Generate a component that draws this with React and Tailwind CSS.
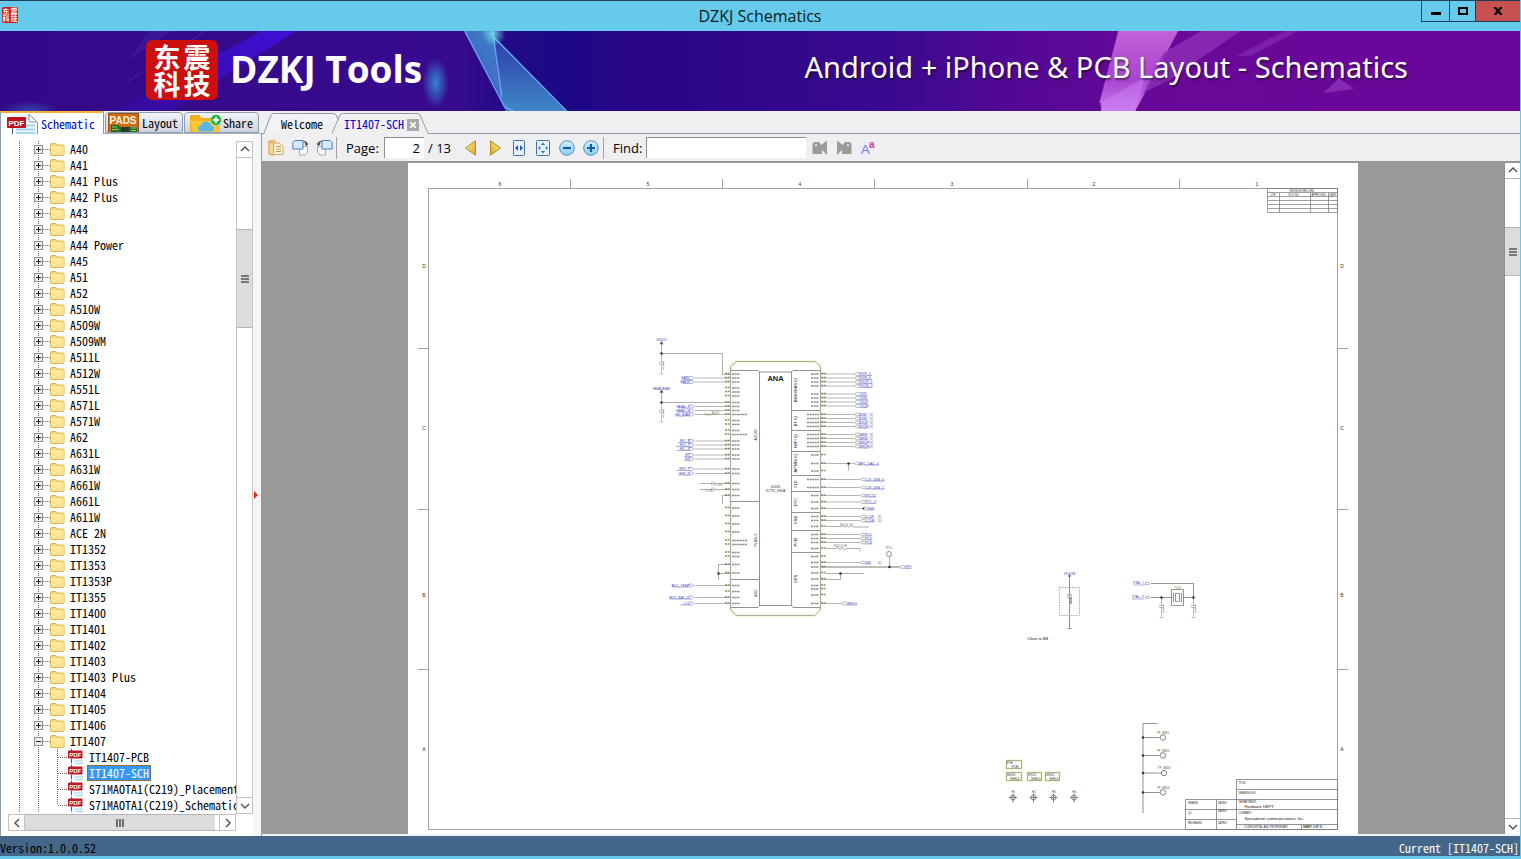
import React, { useState } from "react";

const MONO = "font-['Noto_Sans_Mono_CJK_SC','Liberation_Mono',monospace]";
const UI = "font-['Open_Sans','Noto_Sans',sans-serif]";

const FOLDERS = [
  "A40", "A41", "A41 Plus", "A42 Plus", "A43", "A44", "A44 Power", "A45", "A51", "A52",
  "A510W", "A509W", "A509WM", "A511L", "A512W", "A551L", "A571L", "A571W", "A62", "A631L",
  "A631W", "A661W", "A661L", "A611W", "ACE 2N", "IT1352", "IT1353", "IT1353P", "IT1355",
  "IT1400", "IT1401", "IT1402", "IT1403", "IT1403 Plus", "IT1404", "IT1405", "IT1406",
];
const FILES = ["IT1407-PCB", "IT1407-SCH", "S71MAOTA1(C219)_Placement", "S71MAOTA1(C219)_Schematic"];

/* ---------- icons ---------- */

function FolderIcon() {
  return (
    <svg width="15" height="13" viewBox="0 0 15 13" className="shrink-0" aria-hidden="true">
      <path d="M.5 1.5q0-1 1-1h4l1.500 1.500h6q1 0 1 1v8.500q0 1-1 1h-11.500q-1 0-1-1z" fill="#f5d672" stroke="#dcb858" />
      <path d="M1 4h12.500v7.500h-12.500z" fill="#fce694" />
      <path d="M1 4h12.500" stroke="#fff4bd" />
    </svg>
  );
}

function PdfSmall() {
  return (
    <svg width="16" height="16" viewBox="0 0 16 16" className="shrink-0" aria-hidden="true">
      <path d="M3 1h8l4 4v11H3z" fill="#f3f9fd" />
      <path d="M3.500 10v6M6 12h9M8 14.500h7" stroke="#a9d3ea" />
      <path d="M3.500 0v2M3.500 10v4" stroke="#555" strokeWidth="1" />
      <rect x="0" y="1.500" width="14.500" height="8" rx="1" fill="#c01726" />
      <text x="1.300" y="7.800" fontSize="6" fontWeight="700" fill="#fff" fontFamily="Liberation Sans, sans-serif">PDF</text>
    </svg>
  );
}

function PdfTabIcon() {
  return (
    <svg width="32" height="20" viewBox="0 0 32 20" className="shrink-0" aria-hidden="true">
      <path d="M5 0h17l8 8v12H5z" fill="#eef7fc" />
      <path d="M22 0l8.500 8.500V20M22 0v6q0 2 2 2h6" fill="#fff" stroke="#7d98ac" />
      <path d="M5.500 14v6" stroke="#555" />
      <path d="M9 15.500h19M18 11.500h10M9 19h19" stroke="#a3d6ef" strokeWidth="2" />
      <rect x="0" y="3" width="19" height="11" rx="1" fill="#c3101f" />
      <text x="1.500" y="11.500" fontSize="8" fontWeight="700" fill="#fff" fontFamily="Liberation Sans, sans-serif">PDF</text>
    </svg>
  );
}

function PadsIcon() {
  return (
    <svg width="31" height="19" viewBox="0 0 31 19" className="shrink-0" aria-hidden="true">
      <rect x=".5" y=".5" width="30" height="19" fill="#cf6a1c" stroke="#a4500f" />
      <path d="M3 12h7l2 2h17v5H3z" fill="#286a2c" />
      <rect x="13" y="14" width="8" height="5" fill="#263a2d" />
      <path d="M4 14h5M4 16.500h7M23 15h5M23 17.500h5" stroke="#8bd05b" />
      <text x="1.500" y="10.500" fontSize="10" fontWeight="700" fill="#fff6cf" fontFamily="Liberation Sans, sans-serif">PADS</text>
    </svg>
  );
}

function ShareIcon() {
  return (
    <svg width="32" height="18" viewBox="0 0 32 18" className="shrink-0" aria-hidden="true">
      <path d="M0 2q0-1 1-1h8l3 3h16q2 0 2 2v12H2q-2 0-2-2z" fill="#f3b01d" />
      <path d="M0 7h30v11H3z" fill="#fcc733" />
      <path d="M11 17.500q-3 0-3-3t3-3q1-4 5-4t5 4q3 .5 3 3t-3 3z" fill="#58b5ee" />
      <circle cx="26" cy="6" r="5.500" fill="#2db34a" stroke="#c5edcc" strokeWidth=".6" />
      <path d="M26 3v6M23 6h6" stroke="#fff" strokeWidth="1.800" />
    </svg>
  );
}

function OpenIcon() {
  return (
    <svg width="16" height="16" viewBox="0 0 16 16" aria-hidden="true">
      <path d="M1 1l6-.5v13l-6 1z" fill="#f2d089" stroke="#d9a84e" />
      <path d="M5 3h6l4 3v8.500H5z" fill="#fdf3d8" stroke="#c9a869" />
      <path d="M8 6.500h5M8 9h5M8 11.500h5" stroke="#c79b4d" />
      <path d="M1 1.500l4.500 2.500v11.500L1 13.500z" fill="#f7d896" stroke="#d9a84e" />
    </svg>
  );
}

function RotateIcon({ flip }) {
  return (
    <svg width="17" height="16" viewBox="0 0 17 16" className={flip ? "-scale-x-100" : ""} aria-hidden="true">
      <path d="M7.500 6.500h8v6l-2.500 2.500H7.500z" fill="#f8f8f8" stroke="#a9a9a9" />
      <path d="M.8 2.500l2-2H11v8.500H.8z" fill="#d4e9fa" stroke="#4a80b4" />
      <path d="M11.500 1.500q3 0 3 2.500" fill="none" stroke="#333" strokeWidth="1.200" />
      <path d="M12.500 3.500h4l-2 2.500z" fill="#333" />
    </svg>
  );
}

function ArrowIcon({ flip }) {
  return (
    <svg width="14" height="16" viewBox="0 0 14 16" className={flip ? "-scale-x-100" : ""} aria-hidden="true">
      <defs>
        <linearGradient id="gold" x1="0" x2="1" y1="0" y2="1">
          <stop offset="0" stopColor="#fff0a4" />
          <stop offset="1" stopColor="#d8a51f" />
        </linearGradient>
      </defs>
      <path d="M1.500 8L11.500.8V15.200z" fill="url(#gold)" stroke="#b58a1c" strokeLinejoin="round" />
    </svg>
  );
}

function FitIcon({ page }) {
  return (
    <svg width="16" height="16" viewBox="0 0 16 16" aria-hidden="true">
      {page ? (
        <>
          <rect x="1.500" y=".5" width="13" height="15" rx="1" fill="#e4f1fd" stroke="#416fa6" />
          <path d="M8 2.500l2 2.500H6zM8 13.500l2-2.500H6zM3 8l2.200-2v4zM13 8l-2.200-2v4z" fill="#2c6cb5" />
        </>
      ) : (
        <>
          <rect x="2.500" y=".5" width="11" height="15" rx="1" fill="#e4f1fd" stroke="#416fa6" />
          <path d="M4 8l3-3v6zM12 8L9 5v6z" fill="#1c60b0" />
        </>
      )}
    </svg>
  );
}

function ZoomIcon({ plus }) {
  return (
    <svg width="16" height="16" viewBox="0 0 16 16" aria-hidden="true">
      <defs>
        <linearGradient id="zoomFill" x1="0" x2="0" y1="0" y2="1">
          <stop offset="0" stopColor="#d6f0ff" />
          <stop offset="1" stopColor="#86d0f8" />
        </linearGradient>
      </defs>
      <circle cx="8" cy="8" r="7.300" fill="url(#zoomFill)" stroke="#5f8caf" />
      <path d={plus ? "M4 8h8M8 4v8" : "M4 8h8"} stroke="#145a9c" strokeWidth="2.200" />
    </svg>
  );
}

function FindIcon({ flip }) {
  return (
    <svg width="16" height="16" viewBox="0 0 16 16" className={flip ? "-scale-x-100" : ""} aria-hidden="true">
      <path d="M.5 4.500L2 2h5.500l1.500 3L15 .5v14.500l-5-5v4H.5z" fill="#9b9b9b" />
      <circle cx="4" cy="5" r="1" fill="#efeff2" />
    </svg>
  );
}

function CaseIcon() {
  return (
    <svg width="16" height="18" viewBox="0 0 16 18" aria-hidden="true">
      <text x="1" y="15" fontSize="13" fill="#7f6fe6" fontFamily="Liberation Sans, sans-serif">A</text>
      <text x="9" y="9" fontSize="10" fontWeight="700" fill="#c440ad" fontFamily="Liberation Sans, sans-serif">a</text>
    </svg>
  );
}

function Chevron({ dir }) {
  const d = { up: "M1 6l4-4 4 4", down: "M1 3l4 4 4-4", left: "M7 1L3 5l4 4", right: "M3 1l4 4-4 4" }[dir];
  return (
    <svg width="10" height="10" viewBox="0 0 10 10" aria-hidden="true">
      <path d={d} fill="none" stroke="#555" strokeWidth="1.500" />
    </svg>
  );
}

function Grip({ vertical }) {
  return (
    <svg width="8" height="8" viewBox="0 0 8 8" aria-hidden="true">
      <path d={vertical ? "M1 0v8M4 0v8M7 0v8" : "M0 1h8M0 4h8M0 7h8"} stroke="#555" strokeWidth="1.600" />
    </svg>
  );
}

/* ---------- window frame ---------- */

function TitleBar() {
  return (
    <header className={`${UI} grid h-[31px] shrink-0 grid-cols-[1fr_auto_1fr] items-start border-t border-[#1d3f55] bg-[#66cbea]`}>
      <div className="pt-1.5 pl-0.5">
        <div aria-hidden="true" className="grid h-4 w-4 grid-cols-2 content-center justify-items-center rounded-xs bg-[#cc1414] font-['Noto_Sans_CJK_SC',sans-serif] text-[7px] leading-[7px] font-bold text-white">
          <span>东</span><span>震</span><span>科</span><span>技</span>
        </div>
      </div>
      <h1 className="text-base leading-[30px] text-[#0c1c24]">DZKJ Schematics</h1>
      <div className="flex h-[21px] justify-end">
        <button aria-label="Minimize" className="flex w-[28px] items-center justify-center border-b border-l border-[#1d3f55]">
          <span className="mt-1 h-[3px] w-2.5 bg-black" />
        </button>
        <button aria-label="Maximize" className="flex w-[26px] items-center justify-center border-b border-l border-[#1d3f55]">
          <span className="h-2 w-2.5 border-2 border-black" />
        </button>
        <button aria-label="Close" className="flex w-[45px] items-center justify-center border-b border-l border-[#1d3f55] bg-[#c75050]">
          <svg width="10" height="8" viewBox="0 0 10 8" aria-hidden="true">
            <path d="M1.500 0l7 8M8.500 0l-7 8" stroke="#000" strokeWidth="2.200" />
          </svg>
        </button>
      </div>
    </header>
  );
}

function BannerArt() {
  return (
    <svg className="absolute inset-0 h-full w-full" viewBox="0 31 1521 80" preserveAspectRatio="none" aria-hidden="true">
      <defs>
        <linearGradient id="bg" x1="0" x2="1" y1="0" y2="0">
          <stop offset="0" stopColor="#330989" />
          <stop offset=".3" stopColor="#380b8e" />
          <stop offset=".33" stopColor="#240a88" />
          <stop offset=".37" stopColor="#1c0886" />
          <stop offset=".43" stopColor="#2b0587" />
          <stop offset=".58" stopColor="#390990" />
          <stop offset=".68" stopColor="#570896" />
          <stop offset=".78" stopColor="#6a089a" />
          <stop offset="1" stopColor="#6a069a" />
        </linearGradient>
        <linearGradient id="beam" x1="1" x2="0" y1="0" y2="1">
          <stop offset="0" stopColor="#4210f0" stopOpacity=".75" />
          <stop offset="1" stopColor="#4210f0" stopOpacity=".15" />
        </linearGradient>
        <linearGradient id="shardA" x1="0" x2="1" y1="1" y2="0">
          <stop offset="0" stopColor="#3a5cc0" />
          <stop offset="1" stopColor="#4382c8" />
        </linearGradient>
        <linearGradient id="shardB" x1="0" x2="0" y1="0" y2="1">
          <stop offset="0" stopColor="#2f3aa8" />
          <stop offset="1" stopColor="#3f85c8" />
        </linearGradient>
        <linearGradient id="pink" x1="0" x2="0" y1="0" y2="1">
          <stop offset="0" stopColor="#c262d8" />
          <stop offset=".6" stopColor="#a944d0" />
          <stop offset="1" stopColor="#c676ee" />
        </linearGradient>
        <radialGradient id="glow">
          <stop offset="0" stopColor="#3593d8" stopOpacity=".9" />
          <stop offset="1" stopColor="#3593d8" stopOpacity="0" />
        </radialGradient>
        <radialGradient id="spark">
          <stop offset="0" stopColor="#72f2ee" stopOpacity=".8" />
          <stop offset="1" stopColor="#72f2ee" stopOpacity="0" />
        </radialGradient>
      </defs>
      <rect y="31" width="1521" height="80" fill="url(#bg)" />
      <path d="M262 31h34L170 111h-55z" fill="url(#beam)" />
      <path d="M150 31h22L126 62z" fill="#4a2ba8" opacity=".35" />
      <path d="M206 31L127 82" stroke="#5538b8" opacity=".6" />
      <ellipse cx="30" cy="111" rx="28" ry="10" fill="url(#glow)" opacity=".5" />
      <ellipse cx="436" cy="83" rx="13" ry="25" fill="url(#glow)" />
      <path d="M465 31h28l9 68z" fill="url(#shardA)" />
      <path d="M493 36l73 75h-60l-6-14z" fill="url(#shardB)" />
      <path d="M465 31l40 76 9 4M493 31l9 66M493 36l74 75" fill="none" stroke="#6ba5f0" strokeWidth="1.500" />
      <circle cx="494" cy="34" r="12" fill="url(#spark)" />
      <path d="M1119 31h60l-43 80h-34v-8h-2z" fill="url(#pink)" />
      <path d="M1101 103l45-26-10 34h-34z" fill="#cf86f2" opacity=".45" />
      <path d="M1202 31h39l-69 48-28 14 20-40z" fill="#8c2fb4" opacity=".8" />
      <path d="M1285 31h14l-48 25h-14z" fill="#812aad" opacity=".7" />
      <path d="M1340 78l15 11-31 4z" fill="#8429b2" />
    </svg>
  );
}

function Banner() {
  return (
    <section className={`${UI} relative h-20 shrink-0 bg-[#330989]`}>
      <BannerArt />
      <div className="relative flex h-full items-center justify-between pr-28 pb-1 pl-[146px]">
        <div className="flex items-center gap-3">
          <div className="mt-0.5 grid h-[60px] w-[72px] grid-cols-2 content-center justify-items-center rounded-md bg-[#cc0f0f] px-1.5 font-['Noto_Sans_CJK_SC',sans-serif] text-[27px] leading-[27px] font-bold text-white">
            <span>东</span><span>震</span><span>科</span><span>技</span>
          </div>
          <p className="text-[37px] leading-10 font-bold text-white">DZKJ Tools</p>
        </div>
        <p className="pb-1 font-['Noto_Sans',sans-serif] text-[29px] leading-10 font-normal text-white [text-shadow:1px_2px_2px_rgba(0,0,0,0.5)]">
          Android + iPhone &amp; PCB Layout - Schematics
        </p>
      </div>
    </section>
  );
}

/* ---------- tree panel ---------- */

function SideTabs() {
  const idle = "flex h-[21px] items-center overflow-hidden rounded-t-sm border border-[#8b9bb0] bg-linear-to-b from-[#f4f5f9] to-[#cdd2e0]";
  return (
    <div role="tablist" className={`${MONO} flex h-[23px] shrink-0 items-end gap-px border-b border-[#a5b3c2] bg-[#f0f0f0] text-xs leading-4`}>
      <button role="tab" aria-selected="true" className="-mb-px flex h-[23px] w-[104px] items-center gap-0.5 overflow-hidden border-t-2 border-r border-l border-t-[#f9b13c] border-r-[#8b9bb0] border-l-[#8b9bb0] bg-white pl-1.5 text-[#0000c8]">
        <PdfTabIcon />Schematic
      </button>
      <button role="tab" aria-selected="false" className={`${idle} w-[78px] gap-[3px] pl-0.5`}>
        <PadsIcon />Layout
      </button>
      <button role="tab" aria-selected="false" className={`${idle} w-[75px] gap-px pl-[5px]`}>
        <ShareIcon />Share
      </button>
    </div>
  );
}

function Expander({ open }) {
  return (
    <svg width="42" height="16" viewBox="0 0 42 16" className="shrink-0" aria-hidden="true">
      <path d="M11.500 0v16M30.500 0v16" stroke="#6b6b6b" strokeDasharray="1 1" />
      <path d="M35 8.500h7" stroke="#6b6b6b" strokeDasharray="1 1" />
      <rect x="26.500" y="4.500" width="8" height="8" fill="#ededed" stroke="#8c8c8c" />
      <path d={open ? "M28 8.500h5" : "M28 8.500h5M30.500 6v5"} stroke="#222" />
    </svg>
  );
}

function FolderRow({ name, open }) {
  return (
    <li role="treeitem" aria-expanded={!!open} className="flex h-4 items-center">
      <Expander open={open} />
      <button className="flex h-4 items-center gap-[5px] whitespace-nowrap">
        <FolderIcon />
        <span>{name}</span>
      </button>
    </li>
  );
}

function FileRow({ name, selected, last, onPick }) {
  return (
    <li role="treeitem" aria-selected={selected} className="flex h-4 items-center">
      <svg width="60" height="16" viewBox="0 0 60 16" className="shrink-0" aria-hidden="true">
        <path d="M11.500 0v16M30.500 0v16" stroke="#6b6b6b" strokeDasharray="1 1" />
        <path d={last ? "M49.500 0v8" : "M49.500 0v16"} stroke="#6b6b6b" strokeDasharray="1 1" />
        <path d="M50 8.500h10" stroke="#6b6b6b" strokeDasharray="1 1" />
      </svg>
      <button onClick={onPick} className="flex h-4 items-center gap-[3px] whitespace-nowrap">
        <PdfSmall />
        <span className={selected ? "h-4 bg-[#3399ff] px-0.5 text-white outline-1 -outline-offset-1 outline-dotted outline-[#8a5a20]" : "px-0.5"}>{name}</span>
      </button>
    </li>
  );
}

function TreePanel() {
  const [picked, setPicked] = useState("IT1407-SCH");
  const arrow = "flex shrink-0 items-center justify-center border border-[#c3c3c3] bg-white";
  return (
    <aside className="flex w-[262px] shrink-0 flex-col bg-[#f7f8fa]">
      <SideTabs />
      <div className="flex min-h-0 flex-1">
        <div className="flex min-w-0 flex-1 flex-col border-l border-[#8b9bb0] bg-white pt-[7px] pb-[5px] pl-[7px]">
          <div className="flex min-h-0 flex-1">
            <ul role="tree" aria-label="Models" className={`${MONO} min-w-0 flex-1 overflow-hidden text-xs leading-4 text-black`}>
              {FOLDERS.map((f) => <FolderRow key={f} name={f} />)}
              <FolderRow name="IT1407" open />
              {FILES.map((f, i) => (
                <FileRow key={f} name={f} selected={picked === f} last={i === FILES.length - 1} onPick={() => setPicked(f)} />
              ))}
            </ul>
            <div className="flex w-[17px] shrink-0 flex-col border-x border-[#c3c3c3]">
              <button aria-label="Scroll up" className={`${arrow} h-[17px] border-x-0`}><Chevron dir="up" /></button>
              <div className="flex-[71]" />
              <div className="flex flex-[98] items-center justify-center border-y border-[#b5b5b5] bg-[#dcdcdc]"><Grip /></div>
              <div className="flex-[470]" />
              <button aria-label="Scroll down" className={`${arrow} h-[17px] border-x-0`}><Chevron dir="down" /></button>
            </div>
          </div>
          <div className="mr-[17px] flex h-[17px] shrink-0 bg-white">
            <button aria-label="Scroll left" className={`${arrow} w-[17px]`}><Chevron dir="left" /></button>
            <div className="flex flex-1 items-center justify-center border-y border-[#b5b5b5] bg-[#dcdcdc]"><Grip vertical /></div>
            <div className="w-1 border-y border-[#c3c3c3]" />
            <button aria-label="Scroll right" className={`${arrow} w-[17px]`}><Chevron dir="right" /></button>
          </div>
        </div>
        <div className="flex w-[9px] shrink-0 items-center border-r border-[#8b9bb0] bg-[#f5f6f8]">
          <svg width="8" height="8" viewBox="0 0 8 8" className="mt-5" aria-hidden="true">
            <path d="M1 0l4 4-4 4z" fill="#e02b20" />
          </svg>
        </div>
      </div>
    </aside>
  );
}

/* ---------- document area ---------- */

function DocTabs() {
  return (
    <div role="tablist" className={`${MONO} flex h-[23px] shrink-0 items-end bg-[#efefef] text-xs leading-4`}>
      <button role="tab" aria-selected="false" className="relative h-[21px] w-[78px] pl-[19px] text-left text-black">
        <svg className="absolute top-0 left-0" width="80" height="21" viewBox="0 0 80 21" aria-hidden="true">
          <path d="M0 20.500h2L9 2q1-1.500 2.500-1.500H71q2 0 3 1.500l3 6" fill="#f3f3f5" stroke="#8b9bb0" />
        </svg>
        <span className="relative">Welcome</span>
      </button>
      <div className="relative flex h-[21px] w-[92px] items-center gap-[3px] pl-1">
        <svg className="absolute top-0 -left-2" width="100" height="21" viewBox="0 0 100 21" aria-hidden="true">
          <path d="M0 20.500L8 2q1-1.500 2.500-1.500H85q2 0 3 1.500l8 18.500" fill="#f0f0f0" stroke="#8b9bb0" />
          <path d="M1 20.500h94" stroke="#f0f0f0" />
          <path d="M96 20.500h4" stroke="#8b9bb0" />
        </svg>
        <button role="tab" aria-selected="true" className="relative text-[#0000c8]">IT1407-SCH</button>
        <button aria-label="Close tab" className="relative mt-0.5 flex h-3 w-3 items-center justify-center bg-[#a8a8a8]">
          <svg width="6" height="6" viewBox="0 0 6 6" aria-hidden="true"><path d="M0 0l6 6M6 0L0 6" stroke="#fff" strokeWidth="1.600" /></svg>
        </button>
      </div>
      <div className="h-full flex-1 border-b border-[#8b9bb0]" />
    </div>
  );
}

function Tool({ label, children }) {
  return <button aria-label={label} className="flex h-6 w-6 shrink-0 items-center justify-center">{children}</button>;
}

function Toolbar() {
  const [page, setPage] = useState("2");
  const [query, setQuery] = useState("");
  const field = "h-[21px] border-t border-l border-[#8f8f8f] bg-white text-[13px] leading-5 outline-none";
  return (
    <div className={`${UI} flex h-[27px] shrink-0 items-center bg-[#efeff1] pl-0.5 text-[13px] leading-5 text-black`}>
      <Tool label="Open"><OpenIcon /></Tool>
      <Tool label="Rotate right"><RotateIcon /></Tool>
      <Tool label="Rotate left"><RotateIcon flip /></Tool>
      <span className="h-[22px] w-px bg-[#a0a0a0]" />
      <label htmlFor="page" className="ml-[9px] w-[38px]">Page:</label>
      <input id="page" value={page} onChange={(e) => setPage(e.target.value)} className={`${field} w-10 pr-1 text-right`} />
      <span className="ml-1 w-[31px] whitespace-nowrap">/ 13</span>
      <Tool label="Previous page"><ArrowIcon /></Tool>
      <Tool label="Next page"><ArrowIcon flip /></Tool>
      <Tool label="Fit width"><FitIcon /></Tool>
      <Tool label="Fit page"><FitIcon page /></Tool>
      <Tool label="Zoom out"><ZoomIcon /></Tool>
      <Tool label="Zoom in"><ZoomIcon plus /></Tool>
      <span className="h-[22px] w-px bg-[#a0a0a0]" />
      <label htmlFor="find" className="ml-[9px] w-[33px]">Find:</label>
      <input id="find" value={query} onChange={(e) => setQuery(e.target.value)} className={`${field} w-40 px-1`} />
      <span className="w-0.5" />
      <Tool label="Find previous"><FindIcon /></Tool>
      <Tool label="Find next"><FindIcon flip /></Tool>
      <Tool label="Match case"><CaseIcon /></Tool>
    </div>
  );
}

/* ---------- schematic sheet ---------- */

const LEFT_PINS = [374, 378, 382, 388, 392, 396, 402.5, 406.5, 410.5, 414.5, 420.5, 424.5, 430.5, 434.5, 441, 445, 449, 455, 459, 469, 473.5, 483.5, 489.5, 495.5, 508, 516, 524, 532, 540.5, 544.5, 552.5, 556.5, 564.5, 573, 585.5, 591.5, 597.5, 603.5];
const RIGHT_PINS = [374, 378, 382, 386, 394, 398, 402, 406, 414.5, 418.5, 422.5, 426.5, 434.5, 438.5, 442.5, 446.5, 455, 463.5, 471, 479.5, 487.5, 495.5, 502, 508.5, 516.5, 520.5, 526.5, 534.5, 538.5, 542.5, 548.5, 556.5, 562.5, 567, 573, 579, 585.5, 589, 595, 603.5];
const WIDE = [414.5, 418.5, 422.5, 426.5, 434.5, 438.5, 442.5, 446.5, 479.5, 487.5, 540.5, 544.5];

const LEFT_NETS = [
  [378, 682, "EARL"], [382, 682, "EARR"], [406.5, 678, "HEAD_P"], [410.5, 677, "HEAD_N"], [414.5, 675, "HD_BIAS"],
  [441, 678, "MIC_B"], [445, 676, "MIC_P"], [449, 676, "MIC_N"], [455, 684, "EP"], [459, 684, "EN"],
  [469, 676, "SPK_P"], [473.5, 678, "SPK_N"], [585.5, 673, "ADC_TEMP"], [597.5, 671, "ADC_BAT_ID"], [603.5, 680, "LCD"],
];
const RIGHT_NETS = [
  [374, 855, "RXIP_0"], [378, 855, "RXIN_0"], [382, 855, "RXQP_0"], [386, 855, "RXQN_0"],
  [394, 855, "TXIP"], [398, 855, "TXIN"], [402, 855, "TXQP"], [406, 855, "TXQN"],
  [414.5, 855, "BTIP"], [418.5, 855, "BTIN"], [422.5, 855, "BTQP"], [426.5, 855, "BTQN"],
  [434.5, 855, "WFIP"], [438.5, 855, "WFIN"], [442.5, 855, "WFQP"], [446.5, 855, "WFQN"],
  [463.5, 855, "APC_DAC_0"], [479.5, 861, "CLK_26M_0"], [487.5, 861, "CLK_26M_1"], [495.5, 861, "RTC32"], [502, 861, "RTC_O"],
  [508.5, 863, "GND"], [516.5, 861, "U_DP"], [520.5, 861, "U_DM"], [534.5, 861, "PCC"], [538.5, 861, "PCD"], [542.5, 861, "PCS"],
  [562.5, 861, "GPI"], [567, 900, "GPQ"], [603.5, 842, "TEST0"],
];
const RIGHT_SECTIONS = [
  ["BB/MIDAS IQ", 390], ["BT IQ", 421], ["WIFI IQ", 441], ["AP MBI IQ", 463], ["CLK", 484], ["DTC", 502], ["USB", 520], ["PCM", 542], ["GPS", 579],
];
const COLS = [["6", 500], ["5", 648], ["4", 800], ["3", 952], ["2", 1094], ["1", 1257]];
const ROWS = [["D", 266], ["C", 428], ["B", 595], ["A", 749]];

function Vertical({ x, y, size = 4, children }) {
  return <text x={x} y={y} fontSize={size} textAnchor="middle" transform={`rotate(-90 ${x} ${y})`}>{children}</text>;
}

function Capacitor({ x, y }) {
  return (
    <g stroke="#96966e">
      <path d={`M${x} ${y}v8m-2.500 0h5m-5 2h5m-2.500 0v9`} fill="none" strokeWidth=".6" />
      <path d={`M${x - 2} ${y + 20}h4`} strokeWidth=".6" />
      <path d={`M${x + 2} ${y + 7}v9`} strokeDasharray="1.200 .6" strokeWidth="1.400" stroke="#a9a98a" />
    </g>
  );
}

function Dot({ x, y, r = 1.3 }) {
  return <circle cx={x} cy={y} r={r} fill="#333" stroke="none" />;
}

function Schematic() {
  return (
    <svg viewBox="408 163 950 671" className="block w-full" role="img" aria-label="IT1407 schematic, page 2" fontFamily="Liberation Sans, sans-serif" fill="none" strokeWidth=".8">
      {/* sheet border, zone marks */}
      <g stroke="#a4a4a4" strokeWidth="1">
        <rect x="428.500" y="188.500" width="909" height="641" />
        <path d="M570.500 179v9M722.500 179v9M874.500 179v9M1027.500 179v9M1179.500 179v9" />
        <path d="M418 348.500h10M418 509.500h10M418 669.500h10M1338 348.500h10M1338 509.500h10M1338 669.500h10" />
      </g>
      <g fill="#333" fontSize="5" textAnchor="middle">
        {COLS.map(([t, x]) => <text key={t} x={x} y="186">{t}</text>)}
        {ROWS.map(([t, y]) => <text key={t} x="424" y={y + 2}>{t}</text>)}
        {ROWS.map(([t, y]) => <text key={t} x="1342" y={y + 2}>{t}</text>)}
      </g>

      {/* revision block */}
      <path d="M1267.500 188.500h70v24h-70zM1267.500 192.500h70M1267.500 196.500h70M1267.500 200.500h70M1267.500 204.500h70M1267.500 208.500h70M1279.500 192.500v20M1310.500 192.500v20M1328.500 192.500v20" stroke="#777" strokeWidth=".7" />
      <g fill="#333" fontSize="2.600" textAnchor="middle">
        <text x="1302" y="191.500">REVISION RECORD</text>
        <text x="1273" y="195.500">LTR</text><text x="1294" y="195.500">ECO NO:</text><text x="1319" y="195.500">APPROVED:</text><text x="1333" y="195.500">DATE:</text>
      </g>

      {/* main chip */}
      <path d="M736 361.500h79l5.500 5v243l-5.500 6h-79l-5.500-6v-243z" stroke="#f8f8dc" strokeWidth="3" />
      <path d="M736 361.500h79l5.500 5v243l-5.500 6h-79l-5.500-6v-243z" stroke="#8c8c84" strokeWidth=".7" />
      <path d="M731 370.500h27l1.500 1.500h32l1.500-1.500h27M731 607.500h27l1.500-2h32l1.500 2h27M759.500 372v233.500M791.500 372v233.500" stroke="#777" />
      <path d="M731 501.500h28M731 579.500h28M792 410.500h28M792 430.500h28M792 451.500h28M792 475.500h28M792 491.500h28M792 512.500h28M792 530.500h28M792 552.500h28" stroke="#777" />
      <g fill="#222">
        <text x="775.500" y="381" fontSize="7.500" fontWeight="700" textAnchor="middle">ANA</text>
        <text x="775.500" y="488" fontSize="2.600" textAnchor="middle">U0101E</text>
        <text x="775.500" y="491.500" fontSize="2.600" textAnchor="middle">SC7731_LFBGA</text>
        {RIGHT_SECTIONS.map(([t, y]) => <Vertical key={t} x={797} y={y}>{t}</Vertical>)}
        <Vertical x={757} y={435} size={3.5}>AUDIO</Vertical>
        <Vertical x={757} y={540} size={3.5}>PLAID II</Vertical>
        <Vertical x={757} y={593} size={3.5}>ADC</Vertical>
      </g>
      <g strokeWidth="1.500" strokeDasharray="2 .6">
        {LEFT_PINS.map((y) => (
          <g key={y}>
            <path d={`M725 ${y - 0.5}h5`} stroke="#8f8f68" />
            <path d={`M732 ${y}h${WIDE.includes(y) ? 15 : 8}`} stroke="#8a8a8a" />
          </g>
        ))}
        {RIGHT_PINS.map((y) => (
          <g key={y}>
            <path d={`M821 ${y - 0.5}h5`} stroke="#8f8f68" />
            <path d={`M${WIDE.includes(y) ? 807 : 811} ${y}h${WIDE.includes(y) ? 12 : 8}`} stroke="#8a8a8a" />
          </g>
        ))}
      </g>

      {/* nets on both sides */}
      <g stroke="#858585" strokeWidth=".6">
        {LEFT_NETS.map(([y]) => <path key={y} d={`M695 ${y}h35`} />)}
        {RIGHT_NETS.map(([y, x]) => <path key={y} d={`M821 ${y}H${x - 1}M${x + 4} ${y - 1.300}h-3l-1.500 1.300 1.500 1.300h3`} />)}
      </g>
      <g stroke="#7f7fd0" strokeWidth=".6">
        {LEFT_NETS.map(([y, x]) => <path key={y} d={`M${x} ${y + 1.500}H692l2-1.500-2-1.500h-3`} />)}
        {RIGHT_NETS.map(([y, x, t]) => <path key={y} d={`M${x + 4} ${y + 1.500}h${t.length * 2.2}`} />)}
      </g>
      <g fill="#3c3cb4" fontSize="3.400">
        {LEFT_NETS.map(([y, , t]) => <text key={y} x="690" y={y + 1.1} textAnchor="end">{t}</text>)}
        {RIGHT_NETS.map(([y, x, t]) => <text key={y} x={x + 4} y={y + 1.1}>{t}</text>)}
        <text x="661.500" y="341" textAnchor="middle">VDDIO</text>
        <text x="661.500" y="389.500" textAnchor="middle">HEADBIAS</text>
      </g>
      <g fill="#777" fontSize="3">
        {[414.5, 418.5, 422.5, 426.5, 434.5, 438.5, 442.5, 446.5].map((y) => <text key={y} x="869.500" y={y + 1}>[3]</text>)}
        {[516.5, 520.5, 562.5].map((y) => <text key={y} x="878" y={y + 1}>[6]</text>)}
      </g>

      {/* supply branches */}
      <g stroke="#777">
        <path d="M661.500 343v10.500h61v21h8M661.500 391v11.500h69" strokeWidth=".6" />
        <path d="M661.500 341.500l-1.500 2.500h3zM661.500 390l-1.500 2.500h3z" fill="#333" />
        <path d="M700 483.500h12m0-2v4m2-4v4m0-2h16M700 489.500h12m0-2v4m2-4v4m0-2h16M722.500 504v-8.500h8M718.500 580v-15.500h12M718.500 573.500h12" strokeWidth=".6" />
        <path d="M704 414.500l1.500-1 1.500 2 1.500-2 1.500 2 1.500-1.500h4" stroke="#8a8a60" strokeWidth=".7" />
        <path d="M848.500 463.500v7M826 573.500h38M840.500 573.500v6h-19M821 567h79M889.500 557v10M826 526.500h15l2-1 2 2 2-2 2 2 2-2 2 1.500h16M826 548.500h10l2-1.500 2 3 2-3 2 3 2-1.500h14v3" strokeWidth=".6" />
        <circle cx="889" cy="554" r="2.500" stroke="#77774c" />
      </g>
      <Capacitor x={661.5} y={354} />
      <Capacitor x={661.5} y={402} />
      <Dot x={661.5} y={353.5} /><Dot x={661.5} y={402.5} /><Dot x={718.5} y={573.5} /><Dot x={848.5} y={463.5} />
      <Dot x={863.5} y={508.5} r={1} /><Dot x={840.5} y={573.5} /><Dot x={889.5} y={567} />
      <g fill="#7a7a52" fontSize="3">
        <text x="715" y="486">C104</text><text x="705" y="492">C105</text><text x="712" y="414">R103</text>
        <text x="840" y="525.500">R0111 1K</text><text x="834" y="547">R0113 0R</text><text x="885" y="549">TP12</text>
      </g>

      {/* decoupling near the baseband */}
      <text x="1069.500" y="575" fontSize="3.500" fill="#3c3cb4" textAnchor="middle">VDD28</text>
      <path d="M1069.500 576v19m-2.500 0h5m-5 2h5m-2.500 0v31m-2 .5h4" stroke="#777" />
      <path d="M1071 598v6" stroke="#777" strokeWidth="2" strokeDasharray="1 .6" />
      <rect x="1059.500" y="587.500" width="20" height="28" stroke="#999" strokeDasharray="1.500 1" />
      <Dot x={1069.5} y={576} r={1} />
      <text x="1027" y="640" fontSize="4" fill="#222">Close to BB</text>

      {/* crystal */}
      <g fill="#3c3cb4" fontSize="3.200">
        <text x="1133" y="584">XTAL_I</text><text x="1132" y="598">XTAL_O</text>
      </g>
      <path d="M1133 585h12M1132 599h12M1145.500 582.500h3l1.500 1-1.500 1h-3zM1145.500 596.500h3l1.500 1-1.500 1h-3z" stroke="#7f7fd0" strokeWidth=".6" />
      <path d="M1151 583.500h42.500v14M1151 597.500h21M1183 597.500h10M1171.500 589.500h12v16h-12zM1175.500 593.500h4v8h-4zM1173.500 593v9M1181.500 593v9" stroke="#777" />
      <text x="1174" y="589" fontSize="3" fill="#7a7a52">Y101</text>
      <Capacitor x={1161.5} y={597.5} />
      <Capacitor x={1193.5} y={597.5} />
      <Dot x={1161.5} y={597.5} /><Dot x={1193.5} y={597.5} />

      {/* shielding boxes and screw holes */}
      <path d="M1006.500 760.500h15v8h-15zM1006.500 772.500h15v8h-15zM1027.500 772.500h14v8h-14zM1045.500 772.500h14v8h-14z" stroke="#f6f6d4" strokeWidth="2.500" />
      <path d="M1006.500 760.500h15v8h-15zM1006.500 772.500h15v8h-15zM1027.500 772.500h14v8h-14zM1045.500 772.500h14v8h-14z" stroke="#8c8c72" strokeWidth=".7" />
      <g fill="#333" fontSize="2.700">
        <text x="1007" y="763.500">PCB</text><text x="1012" y="767.500">PCB1</text>
        {[1007, 1028, 1046].map((x, i) => (
          <g key={x}><text x={x} y="775.500">SH10{i}</text><text x={x + 3} y="779.500">SHIELD</text></g>
        ))}
        {[1013, 1033.5, 1053.5, 1074].map((x, i) => <text key={x} x={x - 1.5} y="792.500">H{i + 1}</text>)}
      </g>
      {[1013, 1033.5, 1053.5, 1074].map((x) => (
        <g key={x} stroke="#666" strokeWidth=".8">
          <circle cx={x} cy="797.500" r="2.500" />
          <path d={`M${x - 4} 797.500h8M${x} 793.500v9`} />
        </g>
      ))}

      {/* test points */}
      <path d="M1157 723.500h-14V813" stroke="#777" />
      {[[737.5, 1163], [755.5, 1163], [773, 1164], [792.5, 1163]].map(([y, x], i) => (
        <g key={y}>
          <path d={`M1143 ${y}h${x - 1146}`} stroke="#777" />
          <circle cx={x} cy={y} r="2.700" stroke="#666" />
          <Dot x={1143} y={y} />
          <text x={x} y={y - 4} fontSize="2.700" fill="#4a4a30" textAnchor="middle">TP_GND{i + 1}</text>
        </g>
      ))}

      {/* title block */}
      <path d="M1236.500 779.500h101v50h-152v-30h152M1236.500 779.500v50M1236.500 789.500h101M1185.500 809.500h152M1185.500 819.500h51M1216.500 799.500v30M1236.500 824.500h101M1301.500 824.500v5" stroke="#777" />
      <g fill="#222" fontSize="2.600">
        <text x="1238.500" y="783.500">TITLE:</text><text x="1238.500" y="793.500">DRAWING NO:</text>
        <text x="1238.500" y="803">DEPARTMENT:</text><text x="1238.500" y="813.500">COMPANY:</text>
        <text x="1188" y="803.500">DRAWN:</text><text x="1188" y="814">QC:</text><text x="1188" y="824">RELEASED:</text>
        <text x="1218" y="803.500">DATED:</text><text x="1218" y="812">DATED:</text><text x="1218" y="824">DATED:</text>
        <text x="1244" y="828.300">CONFIDENTIAL AND PROPRIETARY</text><text x="1303" y="828.300" fontWeight="700">SHEET: 2 OF 13</text>
      </g>
      <g fill="#111" fontSize="4">
        <text x="1244.500" y="807.500">Hardware DEPT.</text>
        <text x="1244.500" y="820">Spreadtrum communications, Inc.</text>
      </g>
    </svg>
  );
}

function Viewer() {
  const arrow = "flex h-4 shrink-0 items-center justify-center border-[#b5b5b5] bg-white";
  return (
    <main className="flex min-h-0 flex-1 border-t-2 border-[#979797] bg-[#999999]">
      <div className="min-w-0 flex-1 overflow-hidden">
        <div className="mx-auto w-full max-w-[950px] bg-white"><Schematic /></div>
      </div>
      <div className="flex w-4 shrink-0 flex-col border-l border-[#8e8e8e] bg-white">
        <button aria-label="Page up" className={`${arrow} border-b`}><Chevron dir="up" /></button>
        <div className="flex-[48]" />
        <div className="flex flex-[48] items-center justify-center border-y border-[#b5b5b5] bg-[#dcdcdc]"><Grip /></div>
        <div className="flex-[545]" />
        <button aria-label="Page down" className={`${arrow} border-t`}><Chevron dir="down" /></button>
      </div>
    </main>
  );
}

export default function App() {
  return (
    <div className="flex h-screen flex-col overflow-hidden border-r border-b-3 border-[#66cbea] bg-[#f0f0f0]">
      <TitleBar />
      <Banner />
      <div className="flex min-h-0 flex-1">
        <TreePanel />
        <div className="flex min-w-0 flex-1 flex-col border-b-2 border-[#f0f3f7]">
          <DocTabs />
          <Toolbar />
          <Viewer />
        </div>
      </div>
      <footer className={`${MONO} flex h-5 shrink-0 items-end justify-between bg-[#446688] pr-px text-xs leading-4`}>
        <span className="text-black">Version:1.0.0.52</span>
        <span className="text-white">Current [IT1407-SCH]</span>
      </footer>
    </div>
  );
}
